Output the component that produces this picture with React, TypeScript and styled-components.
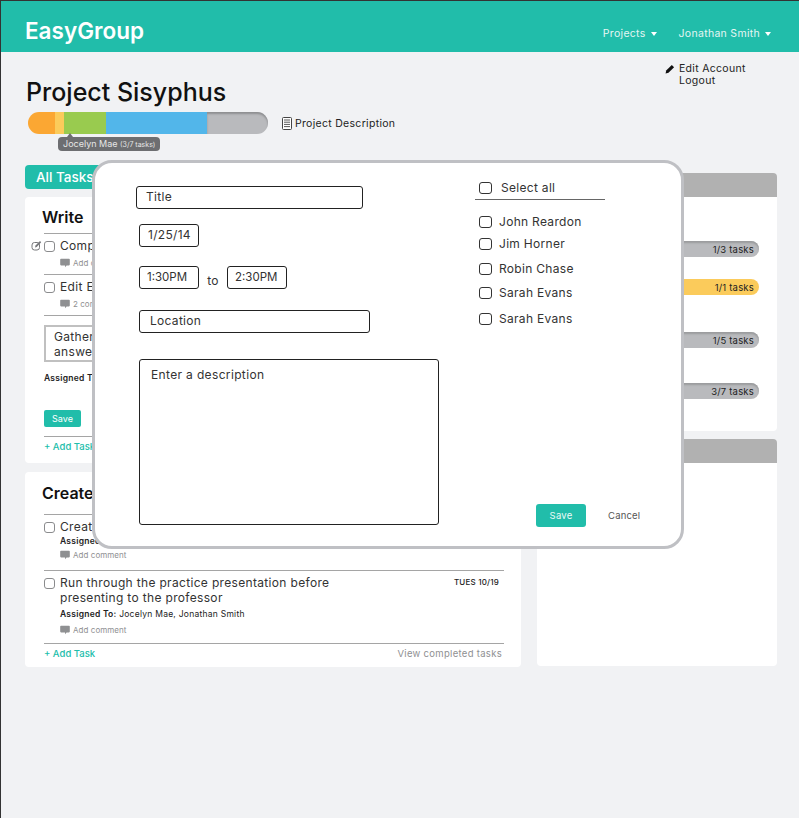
import styled, { createGlobalStyle } from "styled-components";

const GlobalStyle = createGlobalStyle`
    html, body {
        margin: 0;
        padding: 0;
        background: #f1f2f4;
    }
    body {
        font-family: Inter, "Liberation Sans", sans-serif;
        color: #222;
    }
    * {
        box-sizing: border-box;
    }
`

type TaskProps = {
    text: string[]
    date?: string
    assigned?: string
    comment: string
    editable?: boolean
    bottom?: number
}

const CommentIcon = () => (
    <svg width="10" height="10" viewBox="0 0 10 10">
        <path d="M1 .8h8c.5 0 .8.3.8.8v5c0 .5-.3.8-.8.8H6.6L5 9.2V7.4H1c-.5 0-.8-.3-.8-.8v-5c0-.5.3-.8.8-.8z" fill="#8f9092"/>
    </svg>
)

const Task = (props: TaskProps) => {
    const multi = props.text.length > 1
    const hasAssigned = props.assigned !== undefined
    return (
        <TaskRow $bottom={props.bottom ?? 4}>
            {props.editable && (
                <EditMark width="11" height="11" viewBox="0 0 11 11">
                    <rect x="1" y="2.5" width="7.5" height="7.5" rx="2.5" fill="none" stroke="#77787b" strokeWidth="1"/>
                    <path d="M4 7.4l.5-1.8L9 1l1.2 1.2-4.5 4.7z" fill="#77787b"/>
                </EditMark>
            )}
            <Check/>
            <TaskBody>
                <TaskHead>
                    <TaskText>
                        {props.text.map((line) => <div key={line}>{line}</div>)}
                    </TaskText>
                    {props.date && <DueDate>{props.date}</DueDate>}
                </TaskHead>
                {hasAssigned && (
                    <Assigned $top={multi ? 3 : 1}><b>Assigned To:</b> {props.assigned}</Assigned>
                )}
                <CommentLine $top={hasAssigned && !multi ? 1 : 3}>
                    <CommentIcon/>
                    {props.comment}
                </CommentLine>
            </TaskBody>
        </TaskRow>
    )
}

const CardFooter = ({showCompleted, top}: {showCompleted?: boolean; top?: number}) => (
    <Footer $top={top ?? 0}>
        <AddTask>+ Add Task</AddTask>
        {showCompleted && <Completed>View completed tasks</Completed>}
    </Footer>
)

const members = [
    {name: "John Reardon", top: 13},
    {name: "Jim Horner", top: 6},
    {name: "Robin Chase", top: 9},
    {name: "Sarah Evans", top: 8},
    {name: "Sarah Evans", top: 10},
]

const segments = [
    {color: "#fba733", width: 27},
    {color: "#fbcb5b", width: 9},
    {color: "#99cb4f", width: 42},
    {color: "#52b6ea", width: 101},
    {color: "#b9babd", width: 61},
]

export default function App() {
    return (
        <Page>
            <GlobalStyle/>
            <Header>
                <Logo>EasyGroup</Logo>
                <Nav>
                    <NavItem>Projects <Caret/></NavItem>
                    <NavItem>Jonathan Smith <Caret/></NavItem>
                </Nav>
            </Header>

            <Main>
                <AccountMenu>
                    <PencilIcon width="10" height="10" viewBox="0 0 10 10">
                        <path d="M6.8.9L9.1 3.2 3.5 8.8.6 9.4l.6-2.9z" fill="#111"/>
                    </PencilIcon>
                    <div>
                        <div>Edit Account</div>
                        <div>Logout</div>
                    </div>
                </AccountMenu>

                <Title>Project Sisyphus</Title>
                <ProgressRow>
                    <Progress>
                        {segments.map((s) => (
                            <Segment key={s.color} $color={s.color} $width={s.width}/>
                        ))}
                        <Tip>Jocelyn Mae <small>(3/7 tasks)</small></Tip>
                    </Progress>
                    <Description>
                        <svg width="10" height="13" viewBox="0 0 10 13">
                            <rect x=".5" y=".5" width="9" height="12" rx="1" fill="#fff" stroke="#444"/>
                            <path d="M2 3h6M2 5.2h6M2 7.4h6M2 9.6h6" stroke="#444" strokeWidth=".9"/>
                        </svg>
                        Project Description
                    </Description>
                </ProgressRow>

                <Columns>
                    <div>
                        <Tab>All Tasks</Tab>
                        <Card $height={266}>
                            <CardTitle>Write</CardTitle>
                            <Task editable text={["Compile"]} comment="Add comment"/>
                            <Task text={["Edit Essay"]} comment="2 comments"/>
                            <Rule/>
                            <EditBox>
                                <div>Gather</div>
                                <div>answers</div>
                            </EditBox>
                            <AssignedEdit $top={10}><b>Assigned To:</b></AssignedEdit>
                            <SmallSave>Save</SmallSave>
                            <CardFooter top={9}/>
                        </Card>
                        <Card $height={195} $gap={9}>
                            <CardTitle $top={1} $bottom={11}>Create</CardTitle>
                            <Task text={["Create"]} assigned="" comment="Add comment" bottom={8}/>
                            <Task
                                text={["Run through the practice presentation before", "presenting to the professor"]}
                                date="TUES 10/19"
                                assigned="Jocelyn Mae, Jonathan Smith"
                                comment="Add comment"
                                bottom={6}
                            />
                            <CardFooter showCompleted/>
                        </Card>
                    </div>

                    <SideColumn>
                        <SideHead/>
                        <SideBody $height={234}>
                            <MemberBar $top={44}>1/3 tasks</MemberBar>
                            <MemberBar $top={22} $color="#fbcb5b">1/1 tasks</MemberBar>
                            <MemberBar $top={37}>1/5 tasks</MemberBar>
                            <MemberBar $top={35}>3/7 tasks</MemberBar>
                        </SideBody>
                        <SideHead $gap={8}/>
                        <SideBody $height={203}/>
                    </SideColumn>
                </Columns>
            </Main>

            <Modal>
                <FormColumn>
                    <Field $width={227} $indent={9} $shift={-3}>Title</Field>
                    <Field $width={60} $indent={8} $top={15}>1/25/14</Field>
                    <TimeRow>
                        <Field $width={60} $indent={7} $tight>1:30PM</Field>
                        <To>to</To>
                        <Field $width={60} $indent={7} $tight>2:30PM</Field>
                    </TimeRow>
                    <Field $width={231} $indent={10} $top={21}>Location</Field>
                    <DescriptionBox>Enter a description</DescriptionBox>
                </FormColumn>
                <PeopleColumn>
                    <SelectAll>
                        <Check $dark/>
                        Select all
                    </SelectAll>
                    {members.map((m, i) => (
                        <Person key={i} $top={m.top}>
                            <Check $dark/>
                            {m.name}
                        </Person>
                    ))}
                    <ModalActions>
                        <SaveBtn>Save</SaveBtn>
                        <CancelBtn>Cancel</CancelBtn>
                    </ModalActions>
                </PeopleColumn>
            </Modal>
        </Page>
    )
}

const Page = styled.div`
    position: relative;
    min-height: 818px;
    overflow: hidden;
    background: #f1f2f4;
    border-top: 1px solid #333;
    border-left: 1px solid #333;
`

const Header = styled.header`
    height: 51px;
    background: #21bdaa;
    display: flex;
    align-items: center;
    justify-content: space-between;
    padding: 7px 28px 0 24px;
`

const Logo = styled.div`
    color: #fff;
    font-size: 22.5px;
    font-weight: 600;
`

const Nav = styled.nav`
    display: flex;
    gap: 22px;
    padding-top: 7px;
`

const NavItem = styled.div`
    color: #e4f6f3;
    font-size: 10.5px;
    letter-spacing: 0.3px;
    display: flex;
    align-items: center;
    gap: 5px;
`

const Caret = styled.span`
    width: 0;
    height: 0;
    border-left: 3.5px solid transparent;
    border-right: 3.5px solid transparent;
    border-top: 4px solid #fff;
`

const Main = styled.main`
    position: relative;
    padding: 25px 21px 0 24px;
`

const AccountMenu = styled.div`
    position: absolute;
    top: 11px;
    left: 664px;
    display: flex;
    gap: 4px;
    font-size: 10.5px;
    letter-spacing: 0.3px;
    line-height: 12px;
    color: #222;
`

const PencilIcon = styled.svg`
    margin-top: 1px;
`

const Title = styled.h1`
    margin: 0 0 0 1px;
    font-size: 25px;
    line-height: 30px;
    font-weight: 500;
    color: #111;
`

const ProgressRow = styled.div`
    display: flex;
    align-items: center;
    gap: 14px;
    margin: 5px 0 0 3px;
`

const Progress = styled.div`
    position: relative;
    display: flex;
    height: 22px;
    width: 240px;
`

const Segment = styled.div<{$color: string; $width: number}>`
    width: ${(p) => p.$width}px;
    background: ${(p) => p.$color};
    &:first-child {
        border-radius: 11px 0 0 11px;
    }
    &:nth-child(5) {
        border-radius: 0 11px 11px 0;
        box-shadow: inset 0 2px 2px #8e8f91;
    }
`

const Tip = styled.div`
    position: absolute;
    top: 25px;
    left: 30px;
    width: 102px;
    height: 14px;
    border-radius: 4px;
    background: #6d6e71;
    color: #e6e6e6;
    font-size: 9px;
    line-height: 14px;
    padding-left: 5px;
    white-space: nowrap;
    small {
        font-size: 7px;
    }
    &::before {
        content: "";
        position: absolute;
        top: -4px;
        left: 9px;
        border-left: 3px solid transparent;
        border-right: 3px solid transparent;
        border-bottom: 4px solid #6d6e71;
    }
`

const Description = styled.div`
    display: flex;
    align-items: center;
    gap: 3px;
    font-size: 10.5px;
    letter-spacing: 0.3px;
    color: #222;
`

const Columns = styled.div`
    display: grid;
    grid-template-columns: 496px 240px;
    gap: 16px;
    margin-top: 31px;
`

const Tab = styled.div`
    width: 90px;
    height: 24px;
    margin-bottom: 8px;
    border-radius: 4px;
    background: #21bdaa;
    color: #fff;
    font-size: 13.5px;
    font-weight: 500;
    line-height: 24px;
    padding-left: 11px;
`

const Card = styled.section<{$height: number; $gap?: number}>`
    height: ${(p) => p.$height}px;
    margin-top: ${(p) => p.$gap ?? 0}px;
    padding: 10px 17px 0 19px;
    background: #fff;
    border-radius: 4px;
`

const CardTitle = styled.h2<{$top?: number; $bottom?: number}>`
    margin: ${(p) => p.$top ?? 0}px 0 ${(p) => p.$bottom ?? 6}px -2px;
    font-size: 16px;
    line-height: 20px;
    font-weight: 600;
    color: #111;
    white-space: nowrap;
`

const TaskRow = styled.div<{$bottom: number}>`
    position: relative;
    display: flex;
    gap: 5px;
    padding: 4px 0 ${(p) => p.$bottom}px;
    border-top: 1px solid #a5a5a5;
`

const EditMark = styled.svg`
    position: absolute;
    left: -13px;
    top: 6px;
`

const Check = styled.span<{$dark?: boolean}>`
    flex: none;
    width: ${(p) => (p.$dark ? 13 : 11)}px;
    height: ${(p) => (p.$dark ? 12 : 11)}px;
    margin-top: ${(p) => (p.$dark ? 2 : 3)}px;
    border: 1px solid ${(p) => (p.$dark ? "#333" : "#8a8b8d")};
    border-radius: 3px;
    background: #fff;
`

const TaskBody = styled.div`
    flex: 1;
    min-width: 0;
`

const TaskHead = styled.div`
    display: flex;
    justify-content: space-between;
`

const TaskText = styled.div`
    font-size: 12px;
    letter-spacing: 0.33px;
    line-height: 15px;
    color: #333;
    white-space: nowrap;
`

const DueDate = styled.div`
    margin-right: 5px;
    font-size: 8px;
    letter-spacing: 0.2px;
    line-height: 15px;
    font-weight: 500;
    color: #222;
`

const Assigned = styled.div<{$top: number}>`
    margin-top: ${(p) => p.$top}px;
    font-size: 8.5px;
    letter-spacing: 0.25px;
    line-height: 12px;
    color: #222;
    b {
        font-weight: 600;
    }
`

const CommentLine = styled.div<{$top: number}>`
    display: flex;
    align-items: center;
    gap: 3px;
    height: 14px;
    margin-top: ${(p) => p.$top}px;
    font-size: 8px;
    letter-spacing: 0.05px;
    color: #8f9092;
`

const Rule = styled.div`
    height: 1px;
    background: #a5a5a5;
`

const EditBox = styled.div`
    width: 440px;
    height: 37px;
    margin-top: 9px;
    padding: 2px 8px;
    border: 2px solid #c0c0c0;
    font-size: 12px;
    letter-spacing: 0.33px;
    line-height: 15px;
    color: #333;
    white-space: nowrap;
`

const AssignedEdit = styled(Assigned)``

const SmallSave = styled.button`
    display: block;
    width: 37px;
    height: 17px;
    margin-top: 26px;
    padding: 0;
    border: 0;
    border-radius: 2px;
    background: #21bdaa;
    color: #fff;
    font-family: inherit;
    font-size: 9px;
`

const Footer = styled.div<{$top: number}>`
    display: flex;
    justify-content: space-between;
    margin-top: ${(p) => p.$top}px;
    padding: 3px 2px 0 0;
    border-top: 1px solid #a5a5a5;
    font-size: 9.5px;
    line-height: 14px;
`

const AddTask = styled.span`
    color: #21bdaa;
    font-weight: 500;
`

const Completed = styled.span`
    color: #8f9092;
    letter-spacing: 0.3px;
`

const SideColumn = styled.div`
    padding-top: 8px;
`

const SideHead = styled.div<{$gap?: number}>`
    height: 24px;
    margin-top: ${(p) => p.$gap ?? 0}px;
    border-radius: 4px 4px 0 0;
    background: #b1b1b1;
`

const SideBody = styled.div<{$height?: number}>`
    height: ${(p) => p.$height}px;
    padding: 0 18px 0 100px;
    background: #fff;
    border-radius: 0 0 4px 4px;
    display: flex;
    flex-direction: column;
`

const MemberBar = styled.div<{$top: number; $color?: string}>`
    height: 16px;
    margin-top: ${(p) => p.$top}px;
    padding-right: 5px;
    border-radius: 0 8px 8px 0;
    background: ${(p) => p.$color ?? "#b9babd"};
    box-shadow: ${(p) => (p.$color ? "none" : "inset 0 2px 2px #9a9b9d")};
    font-size: 9.5px;
    letter-spacing: 0.2px;
    line-height: 17px;
    text-align: right;
    color: #222;
`

const Modal = styled.div`
    position: absolute;
    top: 159px;
    left: 91px;
    width: 592px;
    height: 389px;
    display: flex;
    padding: 23px 0 19px 44px;
    background: #fff;
    border: 3px solid #bfc0c4;
    border-radius: 20px;
`

const FormColumn = styled.div`
    width: 336px;
    flex: none;
    display: flex;
    flex-direction: column;
    align-items: flex-start;
`

const Field = styled.div<{$width: number; $indent: number; $top?: number; $shift?: number; $tight?: boolean}>`
    width: ${(p) => p.$width}px;
    height: 23px;
    margin-top: ${(p) => p.$top ?? 0}px;
    margin-left: ${(p) => p.$shift ?? 0}px;
    padding-left: ${(p) => p.$indent}px;
    border: 1px solid #222;
    border-radius: 3px;
    font-size: ${(p) => (p.$tight ? 11.5 : 12)}px;
    letter-spacing: ${(p) => (p.$tight ? 0 : 0.3)}px;
    line-height: 20px;
    color: #333;
`

const TimeRow = styled.div`
    display: flex;
    align-items: center;
    margin-top: 19px;
`

const To = styled.span`
    width: 28px;
    padding-top: 5px;
    text-align: center;
    font-size: 12px;
    letter-spacing: 0.3px;
    color: #333;
`

const DescriptionBox = styled.div`
    width: 300px;
    height: 166px;
    margin-top: 26px;
    padding: 7px 11px;
    border: 1px solid #222;
    border-radius: 3px;
    font-size: 12px;
    letter-spacing: 0.35px;
    line-height: 15px;
    color: #333;
`

const PeopleColumn = styled.div`
    flex: 1;
    display: flex;
    flex-direction: column;
    align-items: flex-start;
`

const SelectAll = styled.div`
    display: flex;
    gap: 9px;
    width: 130px;
    height: 20px;
    padding-left: 4px;
    margin-top: -6px;
    margin-bottom: 1px;
    border-bottom: 1px solid #666;
    font-size: 12px;
    letter-spacing: 0.3px;
    line-height: 15px;
    color: #333;
`

const Person = styled.div<{$top: number}>`
    display: flex;
    gap: 7px;
    padding-left: 4px;
    margin-top: ${(p) => p.$top}px;
    font-size: 12px;
    letter-spacing: 0.3px;
    line-height: 16px;
    color: #333;
`

const ModalActions = styled.div`
    margin-top: auto;
    margin-left: 61px;
    display: flex;
    align-items: center;
    gap: 22px;
`

const SaveBtn = styled.button`
    width: 50px;
    height: 23px;
    padding: 0;
    border: 0;
    border-radius: 3px;
    background: #21bdaa;
    color: #eafaf7;
    font-family: inherit;
    font-size: 9.5px;
    letter-spacing: 0.2px;
`

const CancelBtn = styled.span`
    font-size: 9.5px;
    letter-spacing: 0.2px;
    color: #555;
`
